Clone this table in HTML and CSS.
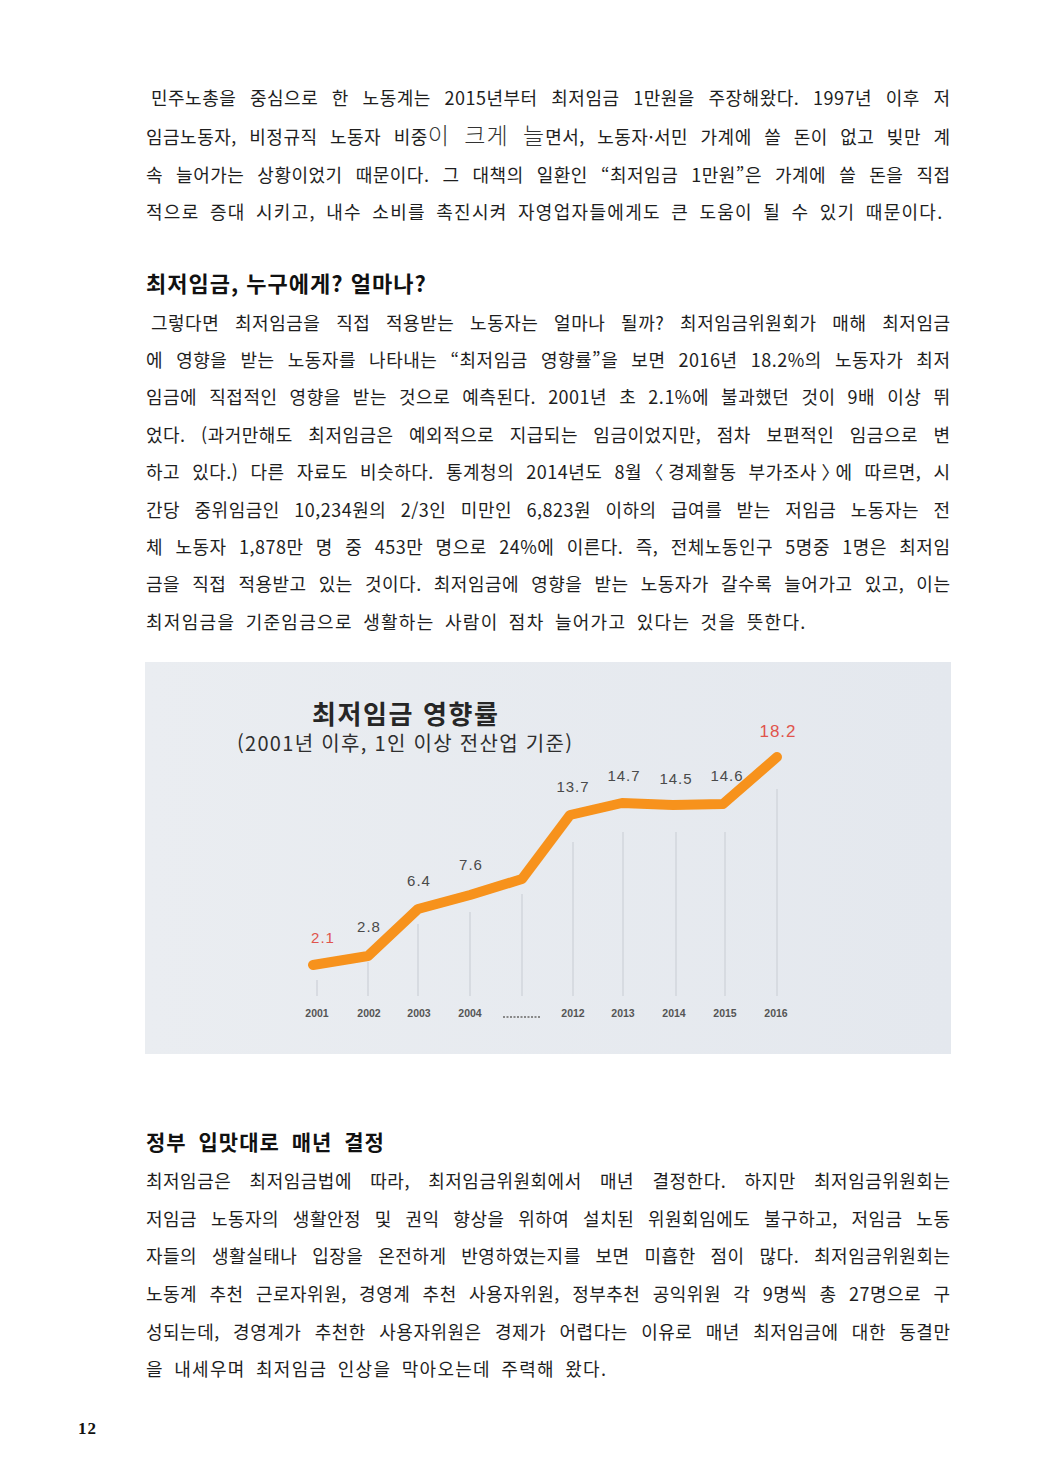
FILE: index.html
```html
<!DOCTYPE html>
<html lang="ko">
<head>
<meta charset="utf-8">
<title>최저임금</title>
<link rel="stylesheet" href="styles.css">
</head>
<body>
<div class="page">
  <p class="para">
    <span class="line first">민주노총을 중심으로 한 노동계는 2015년부터 최저임금 1만원을 주장해왔다. 1997년 이후 저</span>
    <span class="line">임금노동자, 비정규직 노동자 비중<span class="big">이 크게 늘</span>면서, 노동자·서민 가계에 쓸 돈이 없고 빚만 계</span>
    <span class="line">속 늘어가는 상황이었기 때문이다. 그 대책의 일환인 “최저임금 1만원”은 가계에 쓸 돈을 직접</span>
    <span class="line last">적으로 증대 시키고, 내수 소비를 촉진시켜 자영업자들에게도 큰 도움이 될 수 있기 때문이다.</span>
  </p>

  <h2 class="heading h-first">최저임금, 누구에게? 얼마나?</h2>
  <p class="para">
    <span class="line first">그렇다면 최저임금을 직접 적용받는 노동자는 얼마나 될까? 최저임금위원회가 매해 최저임금</span>
    <span class="line">에 영향을 받는 노동자를 나타내는 “최저임금 영향률”을 보면 2016년 18.2%의 노동자가 최저</span>
    <span class="line">임금에 직접적인 영향을 받는 것으로 예측된다. 2001년 초 2.1%에 불과했던 것이 9배 이상 뛰</span>
    <span class="line">었다. (과거만해도 최저임금은 예외적으로 지급되는 임금이었지만, 점차 보편적인 임금으로 변</span>
    <span class="line">하고 있다.) 다른 자료도 비슷하다. 통계청의 2014년도 8월 <span class="half">〈</span>경제활동 부가조사<span class="half">〉</span>에 따르면, 시</span>
    <span class="line">간당 중위임금인 10,234원의 2/3인 미만인 6,823원 이하의 급여를 받는 저임금 노동자는 전</span>
    <span class="line">체 노동자 1,878만 명 중 453만 명으로 24%에 이른다. 즉, 전체노동인구 5명중 1명은 최저임</span>
    <span class="line">금을 직접 적용받고 있는 것이다. 최저임금에 영향을 받는 노동자가 갈수록 늘어가고 있고, 이는</span>
    <span class="line last">최저임금을 기준임금으로 생활하는 사람이 점차 늘어가고 있다는 것을 뜻한다.</span>
  </p>

  <figure class="chart">
    <svg class="chart-svg" viewBox="0 0 806 392" width="806" height="392">
      <defs>
        <linearGradient id="bg" x1="0" y1="0" x2="1" y2="0">
          <stop offset="0" stop-color="#eaedf1"/>
          <stop offset="1" stop-color="#e4e8ee"/>
        </linearGradient>
        <filter id="soft" x="-5%" y="-5%" width="110%" height="110%">
          <feGaussianBlur stdDeviation="0.5"/>
        </filter>
      </defs>
      <rect x="0" y="0" width="806" height="392" fill="url(#bg)"/>
      <text x="167" y="62" class="c-title" textLength="186" lengthAdjust="spacing">최저임금 영향률</text>
      <text x="92" y="89" class="c-sub" textLength="335" lengthAdjust="spacing">(2001년 이후, 1인 이상 전산업 기준)</text>

      <g class="grid">
        <line x1="172" y1="318" x2="172" y2="334"/>
        <line x1="223" y1="300" x2="223" y2="334"/>
        <line x1="273" y1="262" x2="273" y2="334"/>
        <line x1="325" y1="250" x2="325" y2="334"/>
        <line x1="377" y1="232" x2="377" y2="334"/>
        <line x1="428" y1="180" x2="428" y2="334"/>
        <line x1="478" y1="170" x2="478" y2="334"/>
        <line x1="531" y1="170" x2="531" y2="334"/>
        <line x1="580" y1="170" x2="580" y2="334"/>
        <line x1="632" y1="127" x2="632" y2="334"/>
      </g>

      <polyline class="c-line" filter="url(#soft)" points="168,303 223,294 273,247 325,233 377,217 425,153 477,141 528,143 578,142 632,95"/>

      <g class="vals">
        <text x="178" y="281" class="red">2.1</text>
        <text x="224" y="270">2.8</text>
        <text x="274" y="224">6.4</text>
        <text x="326" y="208">7.6</text>
        <text x="428" y="130">13.7</text>
        <text x="479" y="119">14.7</text>
        <text x="531" y="122">14.5</text>
        <text x="582" y="119">14.6</text>
        <text x="633" y="75" class="red big-val">18.2</text>
      </g>

      <g class="years">
        <text x="172" y="355">2001</text>
        <text x="224" y="355">2002</text>
        <text x="274" y="355">2003</text>
        <text x="325" y="355">2004</text>
        <text x="428" y="355">2012</text>
        <text x="478" y="355">2013</text>
        <text x="529" y="355">2014</text>
        <text x="580" y="355">2015</text>
        <text x="631" y="355">2016</text>
      </g>
      <line class="dots" x1="358" y1="355" x2="396" y2="355"/>
    </svg>
  </figure>

  <h2 class="heading h-second">정부 입맛대로 매년 결정</h2>
  <p class="para para-last">
    <span class="line">최저임금은 최저임금법에 따라, 최저임금위원회에서 매년 결정한다. 하지만 최저임금위원회는</span>
    <span class="line">저임금 노동자의 생활안정 및 권익 향상을 위하여 설치된 위원회임에도 불구하고, 저임금 노동</span>
    <span class="line">자들의 생활실태나 입장을 온전하게 반영하였는지를 보면 미흡한 점이 많다. 최저임금위원회는</span>
    <span class="line">노동계 추천 근로자위원, 경영계 추천 사용자위원, 정부추천 공익위원 각 9명씩 총 27명으로 구</span>
    <span class="line">성되는데, 경영계가 추천한 사용자위원은 경제가 어렵다는 이유로 매년 최저임금에 대한 동결만</span>
    <span class="line last">을 내세우며 최저임금 인상을 막아오는데 주력해 왔다.</span>
  </p>
</div>
<footer class="footer"><span class="pageno">12</span></footer>
</body>
</html>
```

FILE: styles.css
```css
html, body {
  margin: 0;
  padding: 0;
  background: #ffffff;
}

body {
  width: 1039px;
  font-family: "Noto Sans CJK KR", "Noto Sans", sans-serif;
  color: #1e1e1e;
}

.page {
  padding: 79px 0 0 146px;
  width: 804px;
}

.para {
  margin: 0;
  font-size: 18px;
  line-height: 37.4px;
  letter-spacing: 0.5px;
  word-spacing: 2px;
}

.para-last {
  line-height: 37.6px;
}

.line {
  display: block;
  white-space: nowrap;
  text-align: justify;
  text-align-last: justify;
  margin-right: -0.5px;
}

.line.first {
  text-indent: 5px;
}

.line.last {
  text-align-last: left;
  letter-spacing: 1.3px;
  word-spacing: 4px;
}

.half {
  font-feature-settings: "halt";
}

.big {
  font-size: 23px;
  font-weight: 300;
  color: #333;
  letter-spacing: 1px;
}

.heading {
  margin: 0;
  line-height: 37px;
  font-weight: 700;
  color: #111;
}

.h-first {
  margin-top: 33px;
  margin-bottom: 3px;
  font-size: 22px;
  letter-spacing: 1px;
}

.h-second {
  margin-top: 69px;
  margin-bottom: 2px;
  font-size: 21px;
  letter-spacing: 1px;
  word-spacing: 5px;
}

.chart {
  margin: 22px 0 0 -1px;
  width: 806px;
  height: 392px;
}

.chart-svg {
  display: block;
}

.c-title {
  font-family: "Noto Sans CJK KR", sans-serif;
  font-size: 26px;
  font-weight: 700;
  fill: #262626;
}

.c-sub {
  font-family: "Noto Sans CJK KR", sans-serif;
  font-size: 20px;
  font-weight: 400;
  fill: #2e2e2e;
}

.grid line {
  stroke: #d2d6dc;
  stroke-width: 1.5;
}

.c-line {
  fill: none;
  stroke: #f7921c;
  stroke-width: 10;
  stroke-linejoin: round;
  stroke-linecap: round;
}

.vals text {
  font-family: "Liberation Sans", sans-serif;
  font-size: 15px;
  letter-spacing: 1px;
  fill: #4a4a4a;
  text-anchor: middle;
}

.vals text.red {
  fill: #e0544c;
}

.vals text.big-val {
  font-size: 17px;
}

.years text {
  font-family: "Liberation Sans", sans-serif;
  font-size: 10.5px;
  font-weight: 700;
  fill: #555;
  text-anchor: middle;
}

.dots {
  stroke: #888;
  stroke-width: 2;
  stroke-dasharray: 2 1.5;
}

.footer {
  margin-top: 27px;
  padding-left: 78px;
  height: 40px;
}

.pageno {
  font-family: "Liberation Serif", serif;
  font-weight: 700;
  font-size: 17px;
  letter-spacing: 1px;
  line-height: 20px;
  color: #111;
}
```
